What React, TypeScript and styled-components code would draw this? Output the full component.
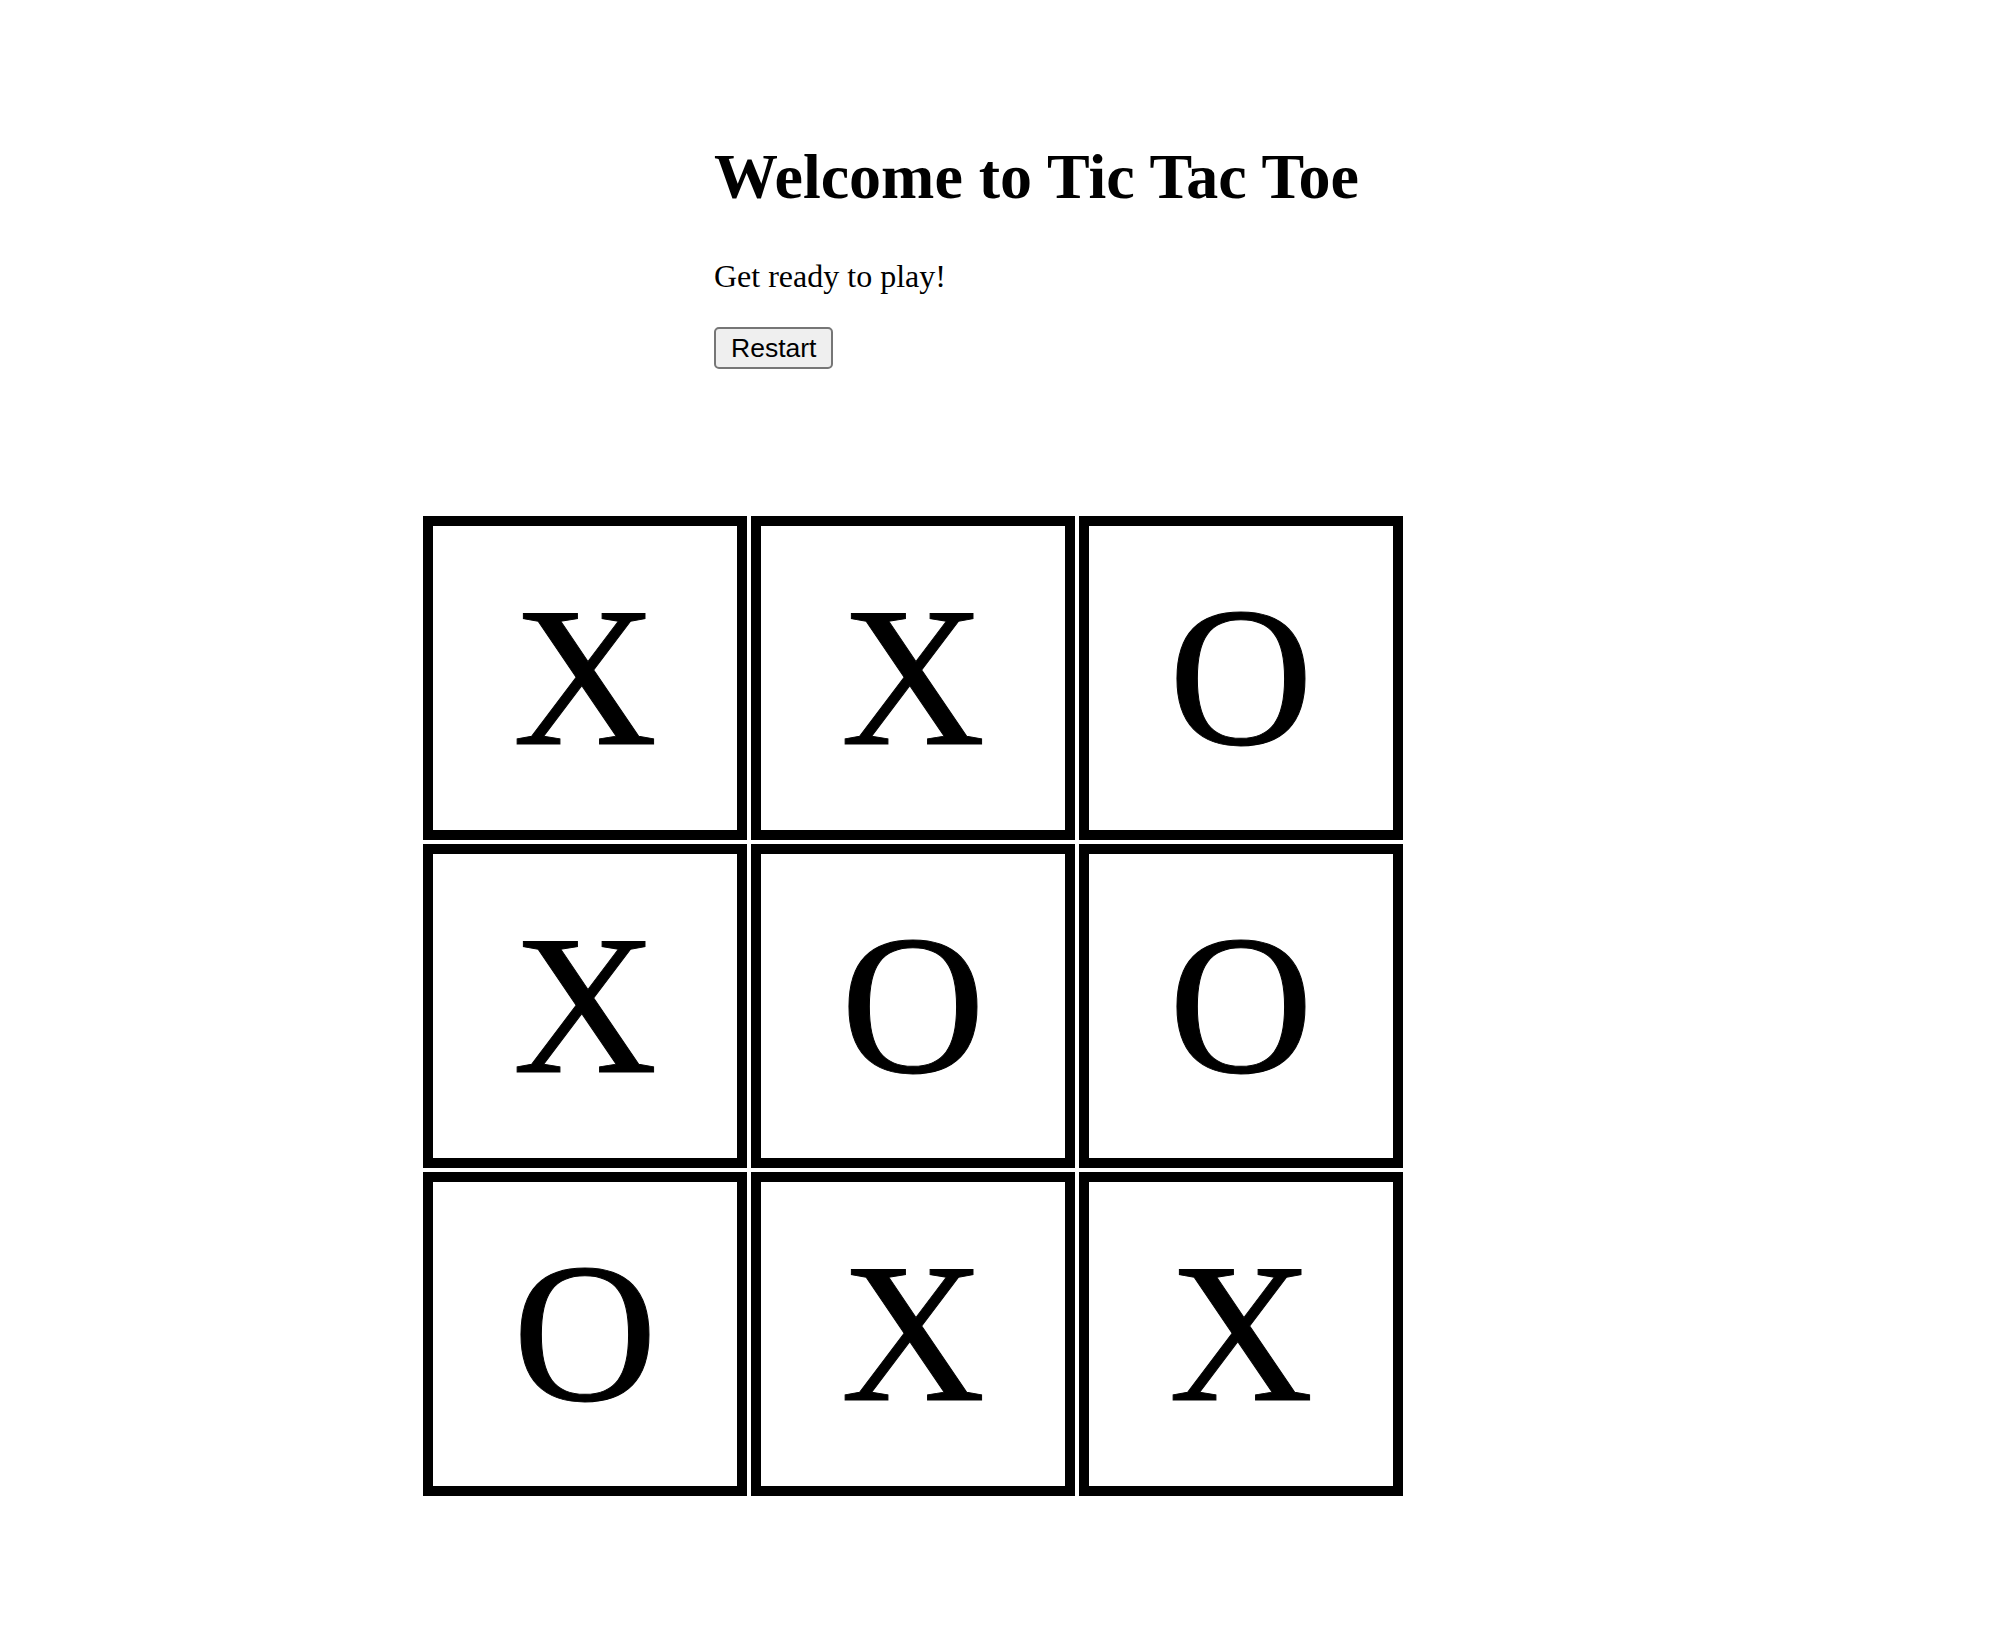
import React from "react";
import styled, { createGlobalStyle } from "styled-components";

const GlobalStyle = createGlobalStyle`
  html, body {
    margin: 0;
    padding: 0;
    background: #ffffff;
    color: #000000;
    font-family: "Liberation Serif", "Times New Roman", serif;
  }
`;

const Page = styled.div`
  display: flex;
  flex-direction: column;
  align-items: flex-start;
  padding: 140px 0 120px 423px;
`;

const Header = styled.header`
  display: flex;
  flex-direction: column;
  align-items: flex-start;
  margin-left: 291px;
`;

const Title = styled.h1`
  margin: 0;
  font-size: 64px;
  font-weight: 700;
  line-height: normal;
`;

const Status = styled.p`
  margin: 44px 0 0;
  font-size: 32px;
  line-height: normal;
`;

const RestartButton = styled.button`
  margin-top: 32px;
  height: 42px;
  padding: 0 15px;
  font-family: "Liberation Sans", Arial, sans-serif;
  font-size: 26.5px;
  color: #000;
  background: #efefef;
  border: 2px solid #767676;
  border-radius: 5px;
  cursor: pointer;
`;

const Board = styled.div`
  display: grid;
  grid-template-columns: repeat(3, 324px);
  grid-auto-rows: 324px;
  gap: 4px;
  margin-top: 147px;
`;

const Cell = styled.div`
  box-sizing: border-box;
  display: flex;
  align-items: center;
  justify-content: center;
  border: 10px solid #000;
  font-size: 200px;
  line-height: normal;
  padding-bottom: 4px;
  -webkit-text-stroke: 1px #000;
`;

const cells = ["X", "X", "O", "X", "O", "O", "O", "X", "X"];

export default function App() {
  return (
    <>
      <GlobalStyle />
      <Page>
        <Header>
          <Title>Welcome to Tic Tac Toe</Title>
          <Status>Get ready to play!</Status>
          <RestartButton>Restart</RestartButton>
        </Header>
        <Board>
          {cells.map((v, i) => (
            <Cell key={i}>{v}</Cell>
          ))}
        </Board>
      </Page>
    </>
  );
}
